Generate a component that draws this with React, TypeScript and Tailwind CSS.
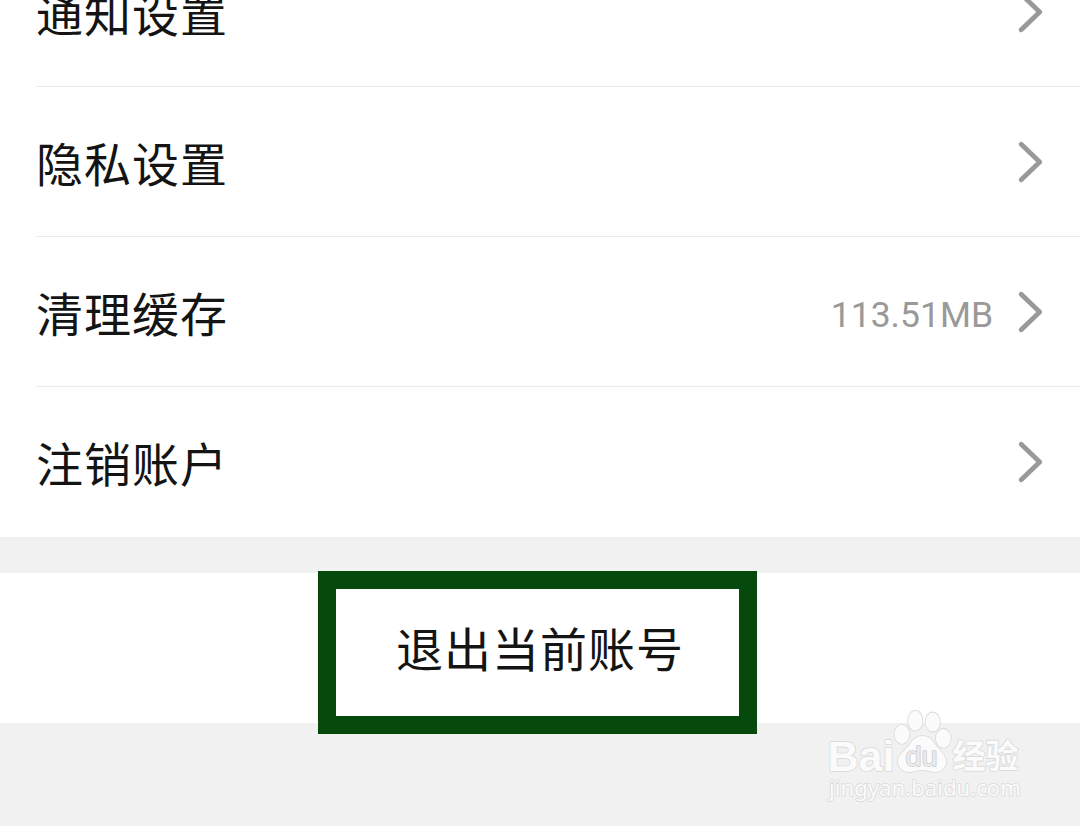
import type { ReactNode } from 'react';

const labelClass =
  "font-['Noto_Sans_CJK_SC',sans-serif] text-[47px] leading-[68px] tracking-[1px] text-[#141414] whitespace-nowrap";

const Chevron = () => (
  <svg className="h-11 w-7 shrink-0" viewBox="0 0 28 44" fill="none">
    <path
      d="M5.2 4.2 L23.7 22 L5.2 39.8"
      stroke="#999999"
      strokeWidth="4.8"
      strokeLinecap="round"
      strokeLinejoin="round"
    />
  </svg>
);

type RowProps = {
  label: string;
  last?: boolean;
  children?: ReactNode;
};

const Row = ({ label, last, children }: RowProps) => (
  <li
    className={`ml-9 flex h-[150px] items-center justify-between pr-9 ${
      last ? '' : 'border-b border-[#ebebeb]'
    }`}
  >
    <span className={labelClass}>{label}</span>
    <div className="flex items-center gap-[23px]">
      {children}
      <Chevron />
    </div>
  </li>
);

const Watermark = () => (
  <svg
    className="absolute top-[705px] left-[820px] h-[105px] w-[210px]"
    viewBox="0 0 210 105"
    fill="#fbfbfb"
    stroke="#d9d9d9"
    strokeWidth="1.6"
    paintOrder="stroke"
    strokeLinejoin="round"
  >
    <text x="7.5" y="65.5" fontSize="43" fontWeight="700" fontFamily="Liberation Sans, sans-serif" textLength="67" lengthAdjust="spacingAndGlyphs">
      Bai
    </text>
    <ellipse cx="82" cy="29.3" rx="7.4" ry="9.6" />
    <ellipse cx="95.3" cy="15.8" rx="7.2" ry="10" />
    <ellipse cx="112.7" cy="17" rx="7.2" ry="9.6" />
    <ellipse cx="123.3" cy="33.3" rx="7.4" ry="9.4" />
    <path d="M102 31 C108 31 112 34 115 39 C119 45 126 49 126 57 C126 63 121 67 115 67 C110 67 107 65 102 65 C97 65 94 67 89 67 C82 67 78 62 78 56 C78 49 86 45 90 39 C93 34 97 31 102 31 Z" />
    <text x="85.5" y="61" fontSize="27" fill="#ececec" stroke="#cccccc" fontFamily="Liberation Sans, sans-serif" textLength="32" lengthAdjust="spacingAndGlyphs">
      du
    </text>
    <text x="132.5" y="62.5" fontSize="33" fontWeight="700" fontFamily="Noto Sans CJK SC, sans-serif" textLength="66" lengthAdjust="spacingAndGlyphs">
      经验
    </text>
    <text x="9" y="91" fontSize="22" fontFamily="Noto Sans, sans-serif" textLength="192" lengthAdjust="spacingAndGlyphs">
      jingyan.baidu.com
    </text>
  </svg>
);

export default function App() {
  return (
    <main className="relative h-[826px] w-[1080px] overflow-hidden bg-[#f1f1f1]">
      <ul className="-mt-[63px] bg-white">
        <Row label="通知设置" />
        <Row label="隐私设置" />
        <Row label="清理缓存">
          <span className="pt-[8px] font-[Roboto,sans-serif] text-[35.5px] leading-none text-[#999999]">
            113.51MB
          </span>
        </Row>
        <Row label="注销账户" last />
      </ul>

      <button className="mt-9 flex h-[150px] w-full items-center justify-center bg-white pb-[2px]">
        <span className={labelClass}>退出当前账号</span>
      </button>

      {/* highlight frame around the log out action */}
      <div className="absolute top-[571px] left-[318px] h-[163px] w-[439px] border-[18px] border-[#054a0c]" />

      <Watermark />
    </main>
  );
}
